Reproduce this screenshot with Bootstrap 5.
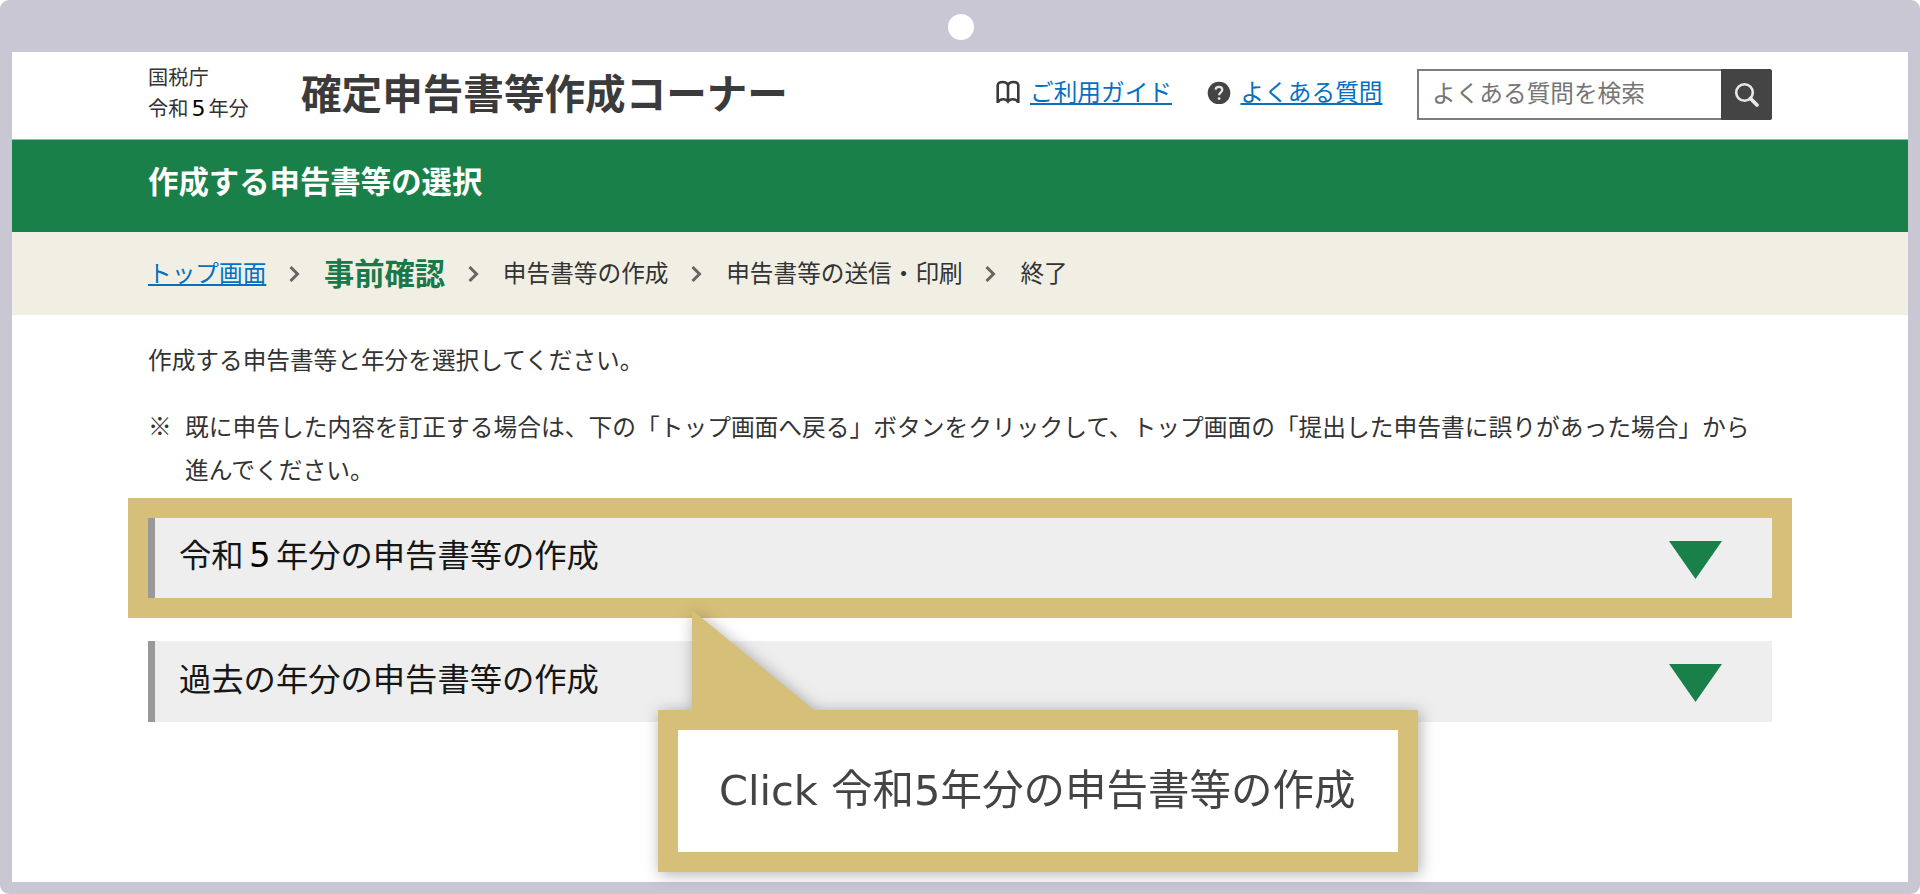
<!DOCTYPE html>
<html lang="ja">
<head>
    <meta charset="UTF-8">
    <meta name="viewport" content="width=device-width, initial-scale=1.0">
    <title>確定申告書等作成コーナー</title>
    <link href="https://cdn.jsdelivr.net/npm/bootstrap@5.3.0/dist/css/bootstrap.min.css" rel="stylesheet">
    <style>
        body {
            font-family: "Noto Sans CJK JP", sans-serif;
            font-size: 23.67px;
            line-height: 43px;
            color: #333;
            background: #fff;
        }
        a { color: #0670c0; text-decoration-thickness: 2px; text-underline-offset: 2px; text-decoration-skip-ink: none; }
        .device { height: 894px; border-radius: 9px; background: #c8c7d3; padding: 0 12px 12px; }
        .device-top { height: 52px; padding-bottom: 0; }
        .camera { width: 26px; height: 26px; margin: 1px 0 0 2px; }
        .screen { height: 830px; }
        .page-width { width: 1624px; margin: 0 auto; }
        .latin { font-family: "DejaVu Sans", sans-serif; color: #000; display: inline-block; text-align: center; line-height: 1; }

        .site-head { height: 87px; }
        .agency { width: 153px; font-size: 20.2px; line-height: 31px; padding-top: 9px; }
        .agency .latin { width: 20px; font-size: 22px; }
        .site-title { width: 695px; font-size: 40.6px; line-height: 50px; font-weight: 700; color: #3b3b3b; padding-top: 15px; }
        .head-link { padding-top: 17px; height: 62px; }
        .head-link a { margin-left: 10px; line-height: 43px; }
        .search-box { width: 355px; height: 51px; margin-top: 17px; }
        .search-box .form-control { font-size: 23.67px; line-height: 30px; border: 2px solid #7d7d7d; border-right: 0; padding: 0 0 6px 13px; color: #757575; }
        .search-box .form-control::placeholder { color: #757575; }
        .search-box .btn { width: 51px; background: #444; border-radius: 0 2px 2px 0; }

        .title-bar { height: 93px; background: #19804a; border-top: 1px solid #8cc0a5; font-size: 30.4px; line-height: 40px; padding-top: 20px; }
        .steps { height: 83px; background: #f1efe3; }
        .steps ol { height: 80px; }
        .steps .now { font-size: 30.3px; font-weight: 700; color: #19794a; }
        .steps svg { margin: 4px 24px 0 22.7px; }

        .intro { padding-top: 23px; margin-bottom: 23px; }
        .note-body { font-size: 23.74px; }
        .note-sign { width: 37px; }
        .fold { height: 81px; width: 1624px; background: #eee; border-left: 7px solid #999; font-size: 32.3px; color: #161616; padding: 0 50px 0 24px; }
        .fold .latin { width: 32.3px; font-size: 34px; padding: 0; }
        .fold > span { padding-bottom: 9px; }
        .fold svg { margin-top: 3px; }
        .picked { border: 20px solid #d6bf78; margin: 8px -20px 23px; width: 1664px; height: 120px; }
        .picked .fold { height: 80px; }

        /* speech bubble over the list */
        .bubble { left: 646px; top: 558px; width: 760px; filter: drop-shadow(2px 2px 8px rgba(0, 0, 0, .32)); }
        .bubble svg { margin-left: 34px; }
        .bubble-text { height: 162px; border: 20px solid #d6bf78; background: #fff; font-family: "DejaVu Sans", "Noto Sans CJK JP", sans-serif; font-size: 41.5px; line-height: 60px; color: #444; padding: 31px 0 0 41px; }
    </style>
</head>
<body>
    <div class="device">
        <div class="device-top d-flex justify-content-center align-items-center">
            <div class="camera rounded-circle bg-white"></div>
        </div>
        <div class="screen bg-white position-relative">
            <header class="site-head page-width d-flex">
                <div class="agency">
                    <div>国税庁</div>
                    <div>令和<span class="latin">5</span>年分</div>
                </div>
                <h1 class="site-title mb-0 text-nowrap">確定申告書等作成コーナー</h1>
                <div class="head-link d-flex align-items-center text-nowrap">
                    <svg width="24" height="24" viewBox="0 0 24 24" fill="none" stroke="#3a3a3a" stroke-width="2.6">
                        <path d="M12 4V22M1.700 23V5C2.500 1 10.500 1 12 5C13.500 1 21.500 1 22.300 5V23M2 22C4 18.500 10 18.500 12 21.500C14 18.500 20 18.500 22 22"/>
                    </svg>
                    <a href="#">ご利用ガイド</a>
                </div>
                <div class="head-link d-flex align-items-center text-nowrap ms-auto">
                    <svg width="24" height="24" viewBox="0 0 24 24">
                        <circle cx="12" cy="13" r="11.300" fill="#444"/>
                        <path d="M8.600 9.600C8.800 6 15.300 6.100 15.300 9.700C15.300 12.300 12.100 12.400 12.100 15.200" fill="none" stroke="#e6e6e6" stroke-width="2.200"/>
                        <circle cx="12.100" cy="18.600" r="1.400" fill="#e6e6e6"/>
                    </svg>
                    <a href="#">よくある質問</a>
                </div>
                <form class="search-box d-flex ms-auto">
                    <input type="text" class="form-control rounded-0 shadow-none" placeholder="よくある質問を検索">
                    <button type="button" class="btn p-0 border-0 flex-shrink-0 d-flex align-items-center justify-content-center" aria-label="検索">
                        <svg width="26" height="26" viewBox="0 0 26 26" fill="none" stroke="#e8e8e8">
                            <circle cx="10.500" cy="10.500" r="8.300" stroke-width="2.600"/>
                            <path d="M16.500 16.500L23 23" stroke-width="3.800" stroke-linecap="round"/>
                        </svg>
                    </button>
                </form>
            </header>

            <div class="title-bar text-white fw-bold">
                <div class="page-width">作成する申告書等の選択</div>
            </div>

            <nav class="steps">
                <ol class="page-width list-unstyled d-flex align-items-center mb-0 text-nowrap">
                    <li><a href="#">トップ画面</a></li>
                    <li class="d-flex align-items-center"><svg width="11" height="16" viewBox="0 0 11 16" fill="none" stroke="#666" stroke-width="3"><path d="M1.500 1L8.500 8L1.500 15"/></svg><span class="now">事前確認</span></li>
                    <li class="d-flex align-items-center"><svg width="11" height="16" viewBox="0 0 11 16" fill="none" stroke="#666" stroke-width="3"><path d="M1.500 1L8.500 8L1.500 15"/></svg>申告書等の作成</li>
                    <li class="d-flex align-items-center"><svg width="11" height="16" viewBox="0 0 11 16" fill="none" stroke="#666" stroke-width="3"><path d="M1.500 1L8.500 8L1.500 15"/></svg>申告書等の送信・印刷</li>
                    <li class="d-flex align-items-center"><svg width="11" height="16" viewBox="0 0 11 16" fill="none" stroke="#666" stroke-width="3"><path d="M1.500 1L8.500 8L1.500 15"/></svg>終了</li>
                </ol>
            </nav>

            <main class="page-width">
                <p class="intro">作成する申告書等と年分を選択してください。</p>
                <div class="d-flex text-nowrap">
                    <div class="note-sign">※</div>
                    <div class="note-body">既に申告した内容を訂正する場合は、下の「トップ画面へ戻る」ボタンをクリックして、トップ画面の「提出した申告書に誤りがあった場合」から<br>進んでください。</div>
                </div>

                <div class="picked">
                    <div class="fold d-flex align-items-center justify-content-between">
                        <span>令和<span class="latin">5</span>年分の申告書等の作成</span>
                        <svg width="53" height="38" viewBox="0 0 53 38" fill="#19804a"><path d="M0 0H53L26.500 38Z"/></svg>
                    </div>
                </div>
                <div class="fold d-flex align-items-center justify-content-between">
                    <span>過去の年分の申告書等の作成</span>
                    <svg width="53" height="38" viewBox="0 0 53 38" fill="#19804a"><path d="M0 0H53L26.500 38Z"/></svg>
                </div>
            </main>

            <div class="bubble position-absolute">
                <svg class="d-block" width="124" height="100" viewBox="0 0 124 100" fill="#d6bf78"><path d="M0 0L121 99V100H0Z"/></svg>
                <div class="bubble-text text-nowrap">Click 令和5年分の申告書等の作成</div>
            </div>
        </div>
    </div>

    <script src="https://cdn.jsdelivr.net/npm/bootstrap@5.3.0/dist/js/bootstrap.bundle.min.js"></script>
</body>
</html>
